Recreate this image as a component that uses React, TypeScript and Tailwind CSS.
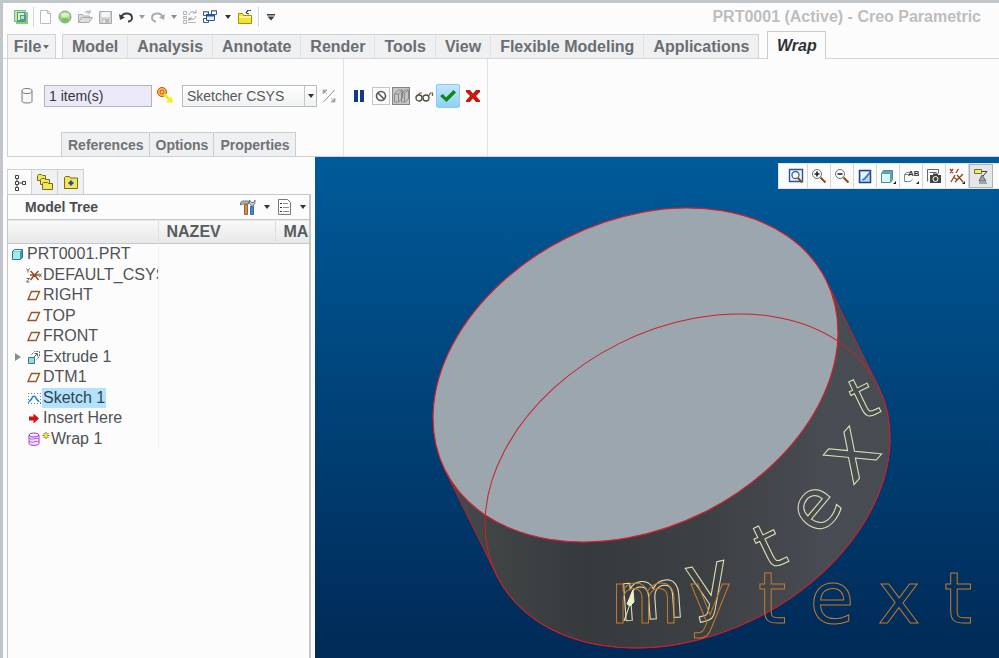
import type { ReactNode } from "react";

const MENU = [
  "Model",
  "Analysis",
  "Annotate",
  "Render",
  "Tools",
  "View",
  "Flexible Modeling",
  "Applications",
];

function Icon({ w = 16, h = 16, children }: { w?: number; h?: number; children: ReactNode }) {
  return (
    <svg width={w} height={h} viewBox={`0 0 ${w} ${h}`} fill="none" className="shrink-0" aria-hidden="true">
      {children}
    </svg>
  );
}

function Caret({ color = "#333" }: { color?: string }) {
  return (
    <Icon w={6} h={4}>
      <path d="M0 0h6L3 4z" fill={color} />
    </Icon>
  );
}

function Tool({ label, className = "", children }: { label: string; className?: string; children: ReactNode }) {
  return (
    <button type="button" aria-label={label} className={`flex shrink-0 items-center justify-center ${className}`}>
      {children}
    </button>
  );
}

function QuickAccess() {
  return (
    <div className="flex items-center">
      <Tool label="Creo" className="w-4">
        <Icon>
          <path d="M1 1h12v2h2v12H3v-2H1z" fill="#8fcb6a" />
          <path d="M1.500 1.500h11v11h-11z" fill="#c7ea7c" stroke="#6fb6c0" />
          <path d="M4 3h8v10H4z" fill="#3c9f9a" />
          <path d="M5 4h6v7H5z" fill="#e9f4a0" />
          <path d="M7 6h6v6H7z" fill="#4b8fc9" />
          <path d="M8 7h3v3H8z" fill="#c9e58d" />
        </Icon>
      </Tool>
      <span className="ml-1 mr-1 h-5 w-px bg-[#d4d8da]" />
      <Tool label="New" className="w-4">
        <Icon>
          <path d="M2.500 1.500h7l3 3v10h-10z M9.500 1.500v3h3" fill="#fff" stroke="#b9bcbe" />
        </Icon>
      </Tool>
      <Tool label="Regenerate" className="ml-1 w-4">
        <Icon>
          <circle cx="7" cy="8" r="6" fill="#9ed487" stroke="#8aa37e" />
          <ellipse cx="7" cy="6" rx="4" ry="2.500" fill="#d7f2ca" />
          <ellipse cx="7" cy="11" rx="3.500" ry="1.800" fill="#71c356" />
        </Icon>
      </Tool>
      <Tool label="Open" className="ml-1 w-4">
        <Icon>
          <path d="M0.500 13.500V5.500h4l1 1.500h6v2.500M0.500 13.500l3-5h11l-3.500 5z" fill="#dcdedf" stroke="#aaadb0" />
          <path d="M7 4c1-2 3-2 4.500-1M12 1v3H9" stroke="#a2a5a8" />
        </Icon>
      </Tool>
      <Tool label="Save" className="ml-1 w-4">
        <Icon>
          <path d="M1.500 2.500h12v12h-12z" fill="#d4d6d8" stroke="#a7aaad" />
          <path d="M3.500 3h8v5h-8z" fill="#f5f6f6" />
          <path d="M4 10h7v4H4z" fill="#b9bcbe" />
          <path d="M5 11h2v3H5z" fill="#eee" />
        </Icon>
      </Tool>
      <Tool label="Undo" className="ml-1 w-4">
        <Icon>
          <path d="M3 8.500c2-6 11-5 11 .5 0 2-2 3.500-4 3.500" stroke="#3a3d40" strokeWidth="2" />
          <path d="M1 5l1 6 5-2.500z" fill="#3a3d40" />
        </Icon>
      </Tool>
      <Tool label="Undo list" className="ml-0.5 w-3">
        <Caret color="#9a9da0" />
      </Tool>
      <Tool label="Redo" className="ml-0.5 w-4">
        <Icon>
          <path d="M13 8.500c-2-6-11-5-11 .5 0 2 2 3.500 4 3.500" stroke="#a8acaf" strokeWidth="2" />
          <path d="M15 5l-1 6-5-2.500z" fill="#a8acaf" />
        </Icon>
      </Tool>
      <Tool label="Redo list" className="ml-0.5 w-3">
        <Caret color="#8b8e91" />
      </Tool>
      <Tool label="Update" className="ml-0.5 w-4">
        <Icon>
          <path d="M1.500 2.500h3v3h-3zM1.500 7.500h3v2h-3zM1.500 11.500h3v3h-3zM6 13.500h8M6 10.500h3" stroke="#b3b6b8" />
          <path d="M7 6c1-4 5-4 6-2M14 7c-1 4-5 4-6 2M14 1v3h-3M7 12V9h3" stroke="#a1a4a7" />
        </Icon>
      </Tool>
      <Tool label="Windows" className="ml-1 w-4">
        <Icon>
          <path d="M1.500 2.500h5v4h-5zM9.500 1.500h5v4h-5zM1.500 9.500h5v4h-5z" fill="#fff" stroke="#4d5560" />
          <path d="M1 2h6v1.500H1zM9 1h6v1.500H9z" fill="#6d7a8b" />
          <path d="M4.500 5.500h8v6h-8z" fill="#e6f0fb" stroke="#1f55a8" />
          <path d="M4 5h9v2.500H4z" fill="#1f55a8" />
        </Icon>
      </Tool>
      <Tool label="Window list" className="ml-1 mr-1 w-3">
        <Caret />
      </Tool>
      <Tool label="Close" className="w-4">
        <Icon>
          <path d="M0.500 14.500v-10h4l1 2h8v8z" fill="#f4e432" stroke="#a39100" />
          <path d="M1 7h12v2H1z" fill="#fbf49a" />
          <path d="M8 4c1-2 3-3 5-2.500M10 1L8 4l3 1" stroke="#333" />
        </Icon>
      </Tool>
      <span className="ml-1 mr-2 h-5 w-px bg-[#d4d8da]" />
      <Tool label="Customize" className="w-2">
        <Icon w={8} h={7}>
          <path d="M0 0h8v1.500H0zM0.500 2.500h7L4 6.500z" fill="#3b3d3f" />
        </Icon>
      </Tool>
    </div>
  );
}

function MenuBar() {
  return (
    <nav className="flex h-7 items-end border-b border-[#d3d6d8] pl-1 text-[16px] font-bold leading-6 text-[#6a6d71]">
      <button type="button" className="flex h-6 w-[49px] items-center justify-center gap-0.5 border border-b-0 border-[#cfd3d5] bg-[#f1f2f3] font-bold">
        File
        <Caret color="#6a6d71" />
      </button>
      <div className="ml-1.5 flex h-6 border border-b-0 border-[#cfd3d5] bg-[#eff0f1]">
        {MENU.map((m) => (
          <button key={m} type="button" className="whitespace-nowrap border-r border-[#e0e3e5] px-[9px] font-bold last:border-r-0">
            {m}
          </button>
        ))}
      </div>
      <button
        type="button"
        className="-mb-px ml-2 h-7 w-[59px] border border-b-0 border-[#c9cdd0] bg-[#fcfcfc] font-bold italic text-[#2f3234]"
      >
        Wrap
      </button>
    </nav>
  );
}

function Ribbon() {
  return (
    <section className="ml-1 flex h-[98px] border-b border-l border-[#cfd2d4]">
      <div className="flex w-[336px] flex-col justify-between border-r border-[#dfe1e3] pt-6">
        <div className="flex h-[26px] items-center pl-3">
          <Icon w={14} h={18}>
            <path d="M2 4v10.500c0 2 10 2 10 0V4" fill="#f7f7f7" stroke="#777a7d" />
            <ellipse cx="7" cy="4" rx="5" ry="2.500" fill="#fff" stroke="#777a7d" />
          </Icon>
          <input
            aria-label="Sketch"
            defaultValue="1 item(s)"
            className="ml-2.5 h-[22px] w-[108px] border border-[#b3b5b8] bg-[#ece8f8] px-1 text-[14px] text-[#333639]"
          />
          <span className="ml-1 flex">
            <Icon w={18} h={18}>
              <circle cx="6" cy="5" r="4.500" fill="#f6c640" stroke="#d63a2a" />
              <circle cx="6" cy="5" r="2" fill="#ffe84d" stroke="#d63a2a" />
              <path d="M8 7l5 5" stroke="#f4e414" strokeWidth="2.500" />
              <path d="M17 16l-1.500-6.500L10 15z" fill="#f8ef10" />
            </Icon>
          </span>
          <div className="relative ml-2">
            <select
              aria-label="Coordinate system"
              className="block h-[22px] w-[135px] appearance-none border border-[#b9bcbe] bg-gradient-to-b from-white to-[#f0f1f2] pl-1 text-[14px] text-[#55585b]"
            >
              <option>Sketcher CSYS</option>
            </select>
            <span className="pointer-events-none absolute inset-y-px right-px flex w-3 items-center justify-center border-l border-[#c3c6c8]">
              <Caret />
            </span>
          </div>
          <Tool label="Flip" className="ml-1">
            <Icon>
              <path d="M2.500 14L13.500 2" stroke="#8e9194" />
              <path d="M2 2h4L2 6zM14 14h-4l4-4zM3 3l3 3M13 13l-3-3" fill="#a4a7aa" stroke="#a4a7aa" strokeWidth="0.800" />
            </Icon>
          </Tool>
        </div>
        <div className="ml-[53px] flex h-6 w-fit border border-b-0 border-[#cccfd1] bg-[#eff0f1] text-[14px] font-bold leading-[22px] text-[#6f7276]">
          {["References", "Options", "Properties"].map((t) => (
            <button key={t} type="button" className="border-r border-[#cccfd1] pl-1.5 pr-[5px] font-bold last:border-r-0">
              {t}
            </button>
          ))}
        </div>
      </div>
      <div className="flex w-36 items-start border-r border-[#dfe1e3] pl-2 pt-6">
        <div className="flex h-[26px] items-center">
          <Tool label="Pause" className="w-3.5">
            <Icon w={12} h={14}>
              <path d="M1 1h4v12H1zM7 1h4v12H7z" fill="#123a8c" />
            </Icon>
          </Tool>
          <Tool label="No preview" className="ml-1.5 size-[18px] border border-[#c5c8ca] bg-[#fafafa]">
            <Icon w={12} h={12}>
              <circle cx="6" cy="6" r="4.500" stroke="#55585b" strokeWidth="1.600" />
              <path d="M3 3l6 6" stroke="#55585b" strokeWidth="1.600" />
            </Icon>
          </Tool>
          <Tool label="Unattached preview" className="ml-0.5 size-[18px] border border-[#828588] bg-[#c3c5c7]">
            <Icon>
              <path d="M1.500 6l4-4h4v8l-4 4h-4zM1.500 6h4v8M5.500 6l4-4" stroke="#85888b" />
              <path d="M8.500 5l4-3h3v9l-4 3h-3zM11.500 5v9M8.500 5h3l4-3" stroke="#85888b" />
            </Icon>
          </Tool>
          <Tool label="Verify" className="ml-1">
            <Icon w={20} h={16}>
              <circle cx="5" cy="10" r="3" stroke="#4f4a40" strokeWidth="1.300" />
              <circle cx="12" cy="10" r="3" stroke="#4f4a40" strokeWidth="1.300" />
              <path d="M8 9.500h1M2 9l4-4h2M14.500 8l2-3h2v3" stroke="#6b5a45" strokeWidth="1.200" />
            </Icon>
          </Tool>
          <Tool label="Accept" className="ml-0.5 size-6 rounded-xs border border-[#8ccbf0] bg-gradient-to-b from-[#c2e6fb] to-[#8fd0f8]">
            <Icon>
              <path d="M0 8l3-2 3 3.500L13.500 2 16 4.500 6.500 14z" fill="#0c8a12" />
            </Icon>
          </Tool>
          <Tool label="Cancel" className="ml-[5px]">
            <Icon>
              <path d="M1 2h4l3 3.500L11 2h4v2l-4 4 4 4.500V14h-4l-3-3.500L5 14H1v-1.500L5 8 1 4z" fill="#c51a14" />
            </Icon>
          </Tool>
        </div>
      </div>
    </section>
  );
}

const PlaneIcon = (
  <Icon>
    <path d="M2 12.500L5.500 4.500h8L10 12.500z" stroke="#9a5523" strokeWidth="1.400" />
  </Icon>
);

const TREE: { name: string; icon: ReactNode; selected?: boolean; expandable?: boolean; isNew?: boolean }[] = [
  {
    name: "DEFAULT_CSYS",
    icon: (
      <Icon>
        <path d="M4 8h9M8.500 8l-4-4M8.500 8l4-4M8.500 8l-4 5M8.500 8l4 5" stroke="#8d5427" strokeWidth="1.500" />
        <path d="M0.500 1.500l1.500 2 1.500-2M2 3.500v2M0.500 11.500h3L0.500 15h3M13 6.500l2.500 3.500M15.500 6.500L13 10" stroke="#555" strokeWidth="0.900" />
      </Icon>
    ),
  },
  { name: "RIGHT", icon: PlaneIcon },
  { name: "TOP", icon: PlaneIcon },
  { name: "FRONT", icon: PlaneIcon },
  {
    name: "Extrude 1",
    expandable: true,
    icon: (
      <Icon>
        <path d="M5.500 5.500l3-3h5v5l-3 3" stroke="#60696e" strokeDasharray="2 1" />
        <path d="M2.500 8.500h6v6h-6z" fill="#8fe0e6" stroke="#4c6e78" />
        <path d="M7 9l4-4M8.500 4.500h3v3" stroke="#4c6e78" />
      </Icon>
    ),
  },
  { name: "DTM1", icon: PlaneIcon },
  {
    name: "Sketch 1",
    selected: true,
    icon: (
      <Icon>
        <path d="M2 3.500h13M2 13.500h13M2.500 3v11M14.500 3v11" stroke="#6a7fa0" strokeDasharray="1 2" />
        <path d="M3 12c1-2 2.500-2 3-4 .8-2.500 3-2.500 4 0 .5 2 2 2 3 4" stroke="#1b7fd6" strokeWidth="1.500" />
      </Icon>
    ),
  },
  {
    name: "Insert Here",
    icon: (
      <Icon>
        <path d="M3 6.500h4.500V3.500L13 8.500l-5.500 5v-3H3z" fill="#d01212" />
      </Icon>
    ),
  },
  {
    name: "Wrap 1",
    isNew: true,
    icon: (
      <Icon>
        <path d="M3 4v8.500c0 2.500 10 2.500 10 0V4" fill="#f3dffb" stroke="#a33fd0" />
        <ellipse cx="8" cy="4" rx="5" ry="2" fill="#f9ecff" stroke="#a33fd0" />
        <path d="M3 7c3 3 6-1 10 1M3 10c3 3 6-1 10 1" stroke="#b55bdc" />
      </Icon>
    ),
  },
];

function ModelTree() {
  return (
    <aside className="flex w-[312px] shrink-0 flex-col pl-1 pt-3">
      <div className="flex h-[25px]" role="tablist">
        <button type="button" role="tab" aria-label="Model tree" aria-selected="true" className="-mb-px flex w-[25px] items-center justify-center border border-b-0 border-[#cfd2d4] bg-[#fcfcfc]">
          <Icon w={14} h={18}>
            <path d="M2.500 1.500h3v3h-3zM2.500 7.500h3v3h-3zM2.500 13.500h3v3h-3zM9.500 7.500h3v3h-3zM4 5v2M4 11v2M6 9h3" stroke="#3f4245" />
          </Icon>
        </button>
        <button type="button" role="tab" aria-label="Layers" aria-selected="false" className="flex w-[26px] items-center justify-center border-r border-t border-[#cfd2d4] bg-[#eff0f1]">
          <Icon w={18} h={18}>
            <path d="M1.500 7.500v-5l1-1h3l1 1h3v5z" fill="#f5e657" stroke="#756c1c" />
            <path d="M4.500 11.500v-5l1-1h3l1 1h4v5z" fill="#f5e657" stroke="#756c1c" />
            <path d="M6.500 16.500v-6l1-1h4l1 1h4v6z" fill="#f5e657" stroke="#756c1c" />
          </Icon>
        </button>
        <button type="button" role="tab" aria-label="Folders" aria-selected="false" className="flex w-[26px] items-center justify-center border-r border-t border-[#cfd2d4] bg-[#eff0f1]">
          <Icon>
            <path d="M1.500 14.500V3.500l1-1h4l1 1.500h7v10.500z" fill="#f5e657" stroke="#756c1c" />
            <circle cx="8" cy="9" r="2" fill="#2347b5" />
            <path d="M8 6v6M5 9h6" stroke="#2347b5" />
          </Icon>
        </button>
      </div>
      <div className="mr-1 flex-1 border border-b-0 border-r-2 border-[#c5c8ca]">
        <div className="flex h-6 items-center pr-0.5">
          <h2 className="flex-1 pl-[17px] text-[14px] font-bold text-[#4b4e51]">Model Tree</h2>
          <Tool label="Settings">
            <Icon w={18} h={18}>
              <path d="M1.500 7V4.500l2-1.500h6v3H4z" fill="#a9b4be" stroke="#5d646a" strokeWidth="0.800" />
              <path d="M5.500 6.500h3v10h-3z" fill="#d98b4c" stroke="#8c4a1c" strokeWidth="0.800" />
              <path d="M11.500 8.500h3v8h-3z" fill="#3f86d4" stroke="#24548f" strokeWidth="0.800" />
              <path d="M10.500 2v3l2 3h1.500l2-3V2l-1.500 2.500h-2z" fill="#c3cad0" stroke="#5d646a" strokeWidth="0.800" />
            </Icon>
          </Tool>
          <Tool label="Settings list" className="ml-1.5 w-2">
            <Caret />
          </Tool>
          <Tool label="Show" className="ml-1.5">
            <Icon w={16} h={18}>
              <path d="M1.500 1.500h9l3 3v12h-12z" fill="#fff" stroke="#77797c" />
              <path d="M3 5.500h2M3 9.500h2M3 13.500h2" stroke="#333" />
              <path d="M6 5.500h5M6 9.500h6M6 13.500h6" stroke="#8a8d90" />
            </Icon>
          </Tool>
          <Tool label="Show list" className="ml-1.5 w-2">
            <Caret />
          </Tool>
        </div>
        <table className="w-full table-fixed border-collapse text-[16px] leading-5 text-[#4f5254]">
          <thead>
            <tr className="h-6 border-y border-[#c5c8ca] bg-gradient-to-b from-[#f8f8f8] to-[#e7e8e9] text-left text-[#595c5f]">
              <th className="w-[150px] border-r border-[#dcdee0] p-0" aria-label="Item" />
              <th className="w-[117px] border-r border-[#dcdee0] py-0 pl-2 pr-0">NAZEV</th>
              <th className="py-0 pl-2 pr-0">MA</th>
            </tr>
          </thead>
          <tbody>
            <tr className="h-5">
              <td className="border-r border-[#f1f1f2] p-0">
                <div className="flex items-center pl-0.5">
                  <Icon>
                    <path d="M2.500 5.500l2-2h8v8l-2 2h-8z" fill="#3f9ca4" stroke="#39747c" />
                    <path d="M3 6h7v7H3z" fill="#9deef0" />
                    <path d="M4.500 4h7l-1.500 1.500H3.500z" fill="#d4fbfb" />
                  </Icon>
                  <span className="pl-px">PRT0001.PRT</span>
                </div>
              </td>
              <td />
              <td />
            </tr>
            {TREE.map((n) => (
              <tr key={n.name} className="odd:h-5 even:h-[21px]">
                <td className="overflow-hidden border-r border-[#f1f1f2] p-0">
                  <div className="flex items-center whitespace-nowrap pl-1.5">
                    <span className="flex w-3 shrink-0">
                      {n.expandable && (
                        <Icon w={8} h={10}>
                          <path d="M1 1l6 4-6 4z" fill="#8b8e91" />
                        </Icon>
                      )}
                    </span>
                    {n.icon}
                    {n.isNew && (
                      <Icon w={8} h={14}>
                        <path d="M4 0v7M0.500 3.500h7M1.500 1l5 5M6.500 1l-5 5" stroke="#6c6a10" />
                        <path d="M2.500 2h3v3h-3z" fill="#f5ef24" />
                      </Icon>
                    )}
                    <span className={n.selected ? "bg-[#b4e2fc] px-px text-[#2f4350]" : "pl-px"}>{n.name}</span>
                  </div>
                </td>
                <td />
                <td />
              </tr>
            ))}
          </tbody>
        </table>
      </div>
    </aside>
  );
}

function ViewToolbar() {
  const cell = "h-6 w-[23px] border-r border-[#d5d8da]";
  return (
    <div className="absolute right-0 top-1.5 flex border border-r-0 border-[#dfe6ec] bg-[#fbfbfb] px-1.5">
      <Tool label="Refit" className={cell}>
        <Icon>
          <path d="M1.500 1.500h13v12h-13z" fill="#eef4fb" stroke="#2a549c" strokeWidth="1.400" />
          <circle cx="7.500" cy="7" r="3.500" fill="#fff" stroke="#4d6178" strokeWidth="1.300" />
          <path d="M10 10l4 4.500" stroke="#8c4a1c" strokeWidth="2" />
        </Icon>
      </Tool>
      <Tool label="Zoom in" className={cell}>
        <Icon>
          <circle cx="6" cy="6" r="4.500" fill="#fff" stroke="#6b7076" />
          <path d="M3.500 6h5M6 3.500v5" stroke="#222" strokeWidth="1.600" />
          <path d="M9.500 9.500l5 5" stroke="#8c4a1c" strokeWidth="2" />
        </Icon>
      </Tool>
      <Tool label="Zoom out" className={cell}>
        <Icon>
          <circle cx="6" cy="6" r="4.500" fill="#fff" stroke="#6b7076" />
          <path d="M3.500 6h5" stroke="#222" strokeWidth="1.600" />
          <path d="M9.500 9.500l5 5" stroke="#8c4a1c" strokeWidth="2" />
        </Icon>
      </Tool>
      <Tool label="Repaint" className={cell}>
        <Icon>
          <path d="M2.500 2.500h11v12h-11z" fill="#b5d6f5" stroke="#1f4487" strokeWidth="1.500" />
          <path d="M4 4h8L4 12z" fill="#e8f3fd" />
          <path d="M5.500 12l2-1 6-7" stroke="#3c68a8" strokeWidth="1.500" />
        </Icon>
      </Tool>
      <Tool label="Display style" className={cell}>
        <Icon>
          <path d="M1.500 5.500l2-3h9v9l-2 3h-9z" fill="#57a7ac" stroke="#57868b" />
          <path d="M2 6h8v8H2z" fill="#d9f8f8" />
          <path d="M16 13v3h-3z" fill="#222" />
        </Icon>
      </Tool>
      <Tool label="Saved orientations" className={cell}>
        <Icon>
          <path d="M1.500 6.500l2-2h3M1.500 6.500v7h6l2-2M1.500 6.500h4" stroke="#5e9298" />
          <text x="5" y="8" fontSize="8" fontWeight="bold" fill="#333" fontFamily="Liberation Sans, sans-serif">
            AB
          </text>
          <path d="M16 13v3h-3z" fill="#222" />
        </Icon>
      </Tool>
      <Tool label="View manager" className={cell}>
        <Icon>
          <path d="M1.500 13.500v-12h11v4M3.500 4.500h7" fill="#f7f7f7" stroke="#666" />
          <path d="M4 7h11v8H4zM7 5.500h5V7H7z" fill="#444" />
          <circle cx="9.500" cy="11" r="2.500" fill="#444" stroke="#fff" />
        </Icon>
      </Tool>
      <Tool label="Datum display" className={cell}>
        <Icon>
          <path d="M1 1l3 4M4 1L1 5M9.500 1L7 5M2 14l4-7M8 7l6 7M14 6L6 14M5 9.500l3 2" stroke="#8d4526" strokeWidth="1.300" />
          <path d="M16 13v3h-3z" fill="#222" />
        </Icon>
      </Tool>
      <Tool label="Annotation display" className="h-6 w-6 border border-[#aeb2b5] bg-[#e4e6e8]">
        <Icon>
          <path d="M1.500 1.500h7v4h-7z" fill="#f7ef63" stroke="#757030" />
          <path d="M9 3.500h5L10 8" stroke="#444" />
          <path d="M9 7l4 6H6zM6 15h8" fill="#9aa7b0" stroke="#59636b" />
        </Icon>
      </Tool>
    </div>
  );
}

// letters of the sketch, flat on the datum plane
const FLAT = [
  { c: "m", x: 330 },
  { c: "y", x: 395 },
  { c: "t", x: 457 },
  { c: "e", x: 517 },
  { c: "x", x: 584 },
  { c: "t", x: 643 },
];

// the same letters wrapped round the cylinder
const WRAPPED = [
  { c: "m", x: 338, y: 462, r: -4, size: 68 },
  { c: "y", x: 398, y: 447, r: -12, size: 74 },
  { c: "t", x: 464, y: 409, r: -26, size: 64 },
  { c: "e", x: 517, y: 365, r: -50, size: 70 },
  { c: "x", x: 553, y: 312, r: -48, size: 78 },
  { c: "t", x: 557, y: 259, r: -26, size: 58 },
];

function Viewport() {
  return (
    <main className="relative flex min-w-0 flex-1 bg-gradient-to-b from-[#005b9a] to-[#002a57]">
      <svg viewBox="0 0 684 501" className="h-full min-h-[501px] w-full" fill="none" role="img" aria-label="Cylinder with wrapped text">
        <defs>
          <linearGradient id="side" x1="120" y1="0" x2="580" y2="0" gradientUnits="userSpaceOnUse">
            <stop offset="0" stopColor="#474b4b" />
            <stop offset="0.330" stopColor="#363a3d" />
            <stop offset="0.600" stopColor="#3e4144" />
            <stop offset="0.850" stopColor="#484c53" />
            <stop offset="1" stopColor="#474c53" />
          </linearGradient>
        </defs>
        <path
          d="M129.600 312.300L181.600 418.300A212.900 153.500 -26.500 0 0 563.400 229.700L511.400 123.700z"
          fill="url(#side)"
          stroke="#c41c26"
        />
        <ellipse cx="320.500" cy="218" rx="212.900" ry="153.500" transform="rotate(-26.500 320.500 218)" fill="#9ca6ae" stroke="#d2202c" strokeWidth="1.200" />
        <ellipse cx="372.500" cy="324" rx="212.900" ry="153.500" transform="rotate(-26.500 372.500 324)" stroke="#c9222c" />
        <g fontFamily="DejaVu Sans, sans-serif" textAnchor="middle">
          {WRAPPED.map((l, i) => (
            <text key={i} x={l.x} y={l.y} fontSize={l.size} transform={`rotate(${l.r} ${l.x} ${l.y})`} stroke="#dfe3b4">
              {l.c}
            </text>
          ))}
          {FLAT.map((l, i) => (
            <text key={i} x={l.x} y="466" fontSize="72" stroke="#c47a2c">
              {l.c}
            </text>
          ))}
        </g>
        <path d="M309 464l6-17M312 447l6-14 1 12-4 4z" stroke="#f0f0c8" fill="#f0f0c8" />
      </svg>
      <ViewToolbar />
    </main>
  );
}

export default function App() {
  return (
    <div className="flex min-h-screen flex-col border-l-[3px] border-t-[3px] border-[#c1c6ca] bg-[#fcfcfc] font-['Liberation_Sans',Arial,sans-serif]">
      <header>
        <div className="flex h-7 items-center justify-between pl-2.5 pr-[18px]">
          <QuickAccess />
          <h1 className="text-[16px] font-bold text-[#bcbec0]">PRT0001 (Active) - Creo Parametric</h1>
        </div>
        <MenuBar />
        <Ribbon />
      </header>
      <div className="flex flex-1">
        <ModelTree />
        <Viewport />
      </div>
    </div>
  );
}
